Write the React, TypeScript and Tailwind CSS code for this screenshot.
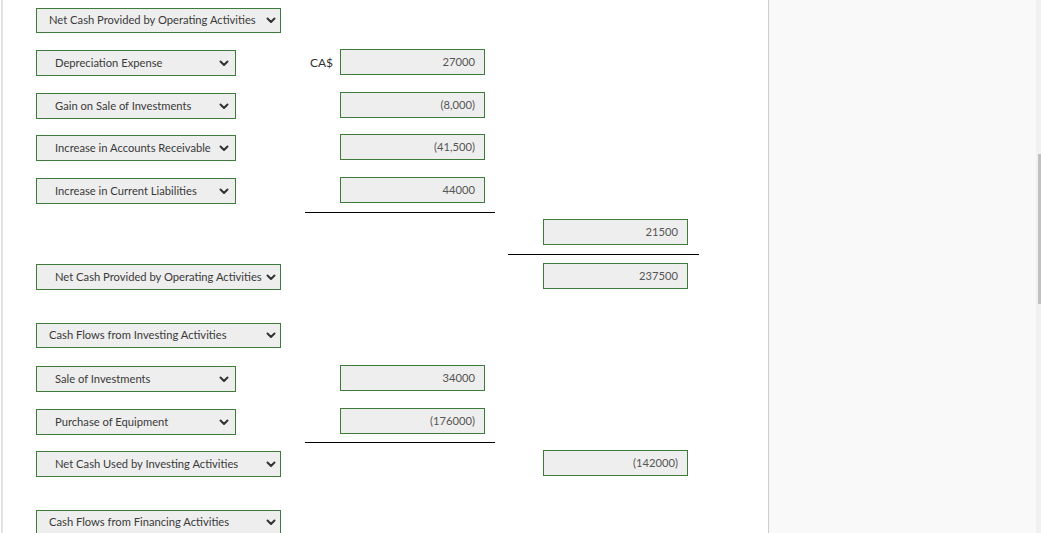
const font = { fontFamily: 'Lato, "Open Sans", sans-serif' };

function Chevron() {
  return (
    <svg width="10" height="7" viewBox="0 0 10 7" className="shrink-0">
      <path d="M1.5 1.5 L5 5 L8.5 1.5" fill="none" stroke="#333" strokeWidth="2" strokeLinecap="round" strokeLinejoin="round" />
    </svg>
  );
}

function Select({ label, wide, indent, h = 'h-[26px]' }: { label: string; wide?: boolean; indent?: boolean; h?: string }) {
  return (
    <div
      className={`${wide ? 'w-[245px] pr-[4px]' : 'w-[200px] pr-[6px]'} ${indent ? 'pl-[18px]' : 'pl-[12px]'} ${h} flex items-center justify-between border border-[#3e7b3a] bg-[#eeeeee] text-[11.2px] text-[#3a3a3a] shrink-0`}
    >
      <span className="whitespace-nowrap">{label}</span>
      <Chevron />
    </div>
  );
}

function Box({ value }: { value: string }) {
  return (
    <div className="w-[145px] h-[26px] flex items-center justify-end pr-[9px] border border-[#3e7b3a] bg-[#eeeeee] text-[11.2px] text-[#555] shrink-0">
      {value}
    </div>
  );
}

function Row({ select, prefix, col2, col3, className }: { select?: React.ReactNode; prefix?: string; col2?: string; col3?: string; className: string }) {
  return (
    <div className={`flex items-start ${className}`}>
      <div className="w-[304px] flex items-start">
        <div className="mt-px">{select}</div>
        {prefix && <span className="ml-auto pr-[7px] pt-[5px] text-[12px] text-[#333]">{prefix}</span>}
      </div>
      <div className="w-[203px]">{col2 && <Box value={col2} />}</div>
      <div>{col3 && <Box value={col3} />}</div>
    </div>
  );
}

export default function App() {
  return (
    <div className="flex h-[533px] w-[1041px] overflow-hidden bg-white" style={font}>
      <div className="w-[767px] h-full ml-px border-l-2 border-[#e2e2e2] pl-[33px]">
        <div className="mt-[8px]">
          <Select label="Net Cash Provided by Operating Activities" wide h="h-[25px]" />
        </div>
        <Row className="mt-[16px] h-[26px]" select={<Select label="Depreciation Expense" indent />} prefix="CA$" col2="27000" />
        <Row className="mt-[17px] h-[26px]" select={<Select label="Gain on Sale of Investments" indent />} col2="(8,000)" />
        <Row className="mt-[16px] h-[26px]" select={<Select label="Increase in Accounts Receivable" indent />} col2="(41,500)" />
        <Row className="mt-[17px] h-[26px]" select={<Select label="Increase in Current Liabilities" indent />} col2="44000" />
        <div className="mt-[9px] ml-[269px] w-[190px] h-px bg-black" />
        <Row className="mt-[6px] h-[26px]" col3="21500" />
        <div className="mt-[9px] ml-[472px] w-[191px] h-px bg-black" />
        <Row className="mt-[8px] h-[26px]" select={<Select label="Net Cash Provided by Operating Activities" wide indent />} col3="237500" />
        <div className="mt-[34px]">
          <Select label="Cash Flows from Investing Activities" wide h="h-[25px]" />
        </div>
        <Row className="mt-[17px] h-[26px]" select={<Select label="Sale of Investments" indent />} col2="34000" />
        <Row className="mt-[17px] h-[26px]" select={<Select label="Purchase of Equipment" indent />} col2="(176000)" />
        <div className="mt-[8px] ml-[269px] w-[190px] h-px bg-black" />
        <Row className="mt-[7px] h-[26px]" select={<Select label="Net Cash Used by Investing Activities" wide indent />} col3="(142000)" />
        <div className="mt-[34px]">
          <Select label="Cash Flows from Financing Activities" wide h="h-[25px]" />
        </div>
      </div>
      <div className="flex-1 h-full border-l border-[#cfcfcf] bg-[#f9f9f9]" />
      <div className="w-[5px] h-full bg-[#f1f1f1] flex flex-col items-end">
        <div className="mt-[154px] w-[3px] h-[150px] bg-[#c1c1c1]" />
      </div>
    </div>
  );
}
